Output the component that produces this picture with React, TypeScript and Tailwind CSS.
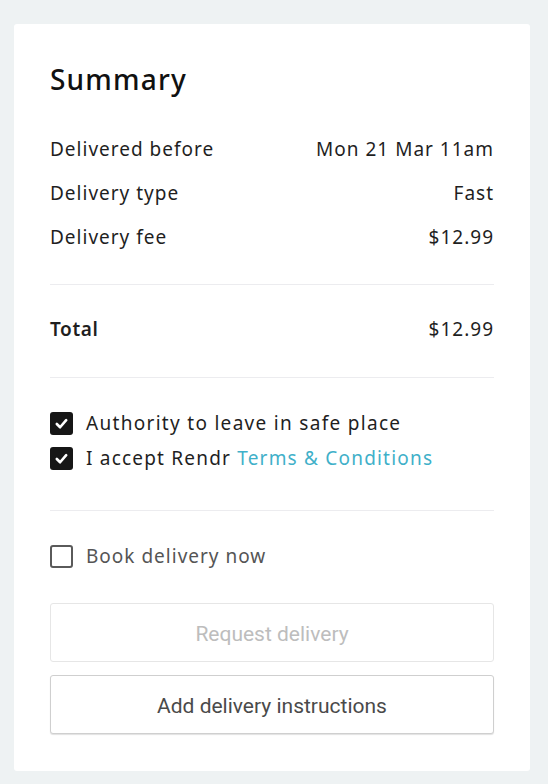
import React from "react";

const font = { fontFamily: '"Noto Sans", "Open Sans", sans-serif' };

function Checked() {
  return (
    <span className="flex h-[23px] w-[23px] shrink-0 items-center justify-center rounded-[3px] bg-[#161616]">
      <svg width="15" height="15" viewBox="0 0 16 16" fill="none">
        <path d="M3 8.5 L6.5 12 L13 4.5" stroke="white" strokeWidth="2.8" strokeLinecap="round" strokeLinejoin="round" />
      </svg>
    </span>
  );
}

function Unchecked() {
  return <span className="h-[23px] w-[23px] shrink-0 rounded-[3px] border-2 border-[#5a5a5a] bg-white" />;
}

function Row({ label, value, bold }: { label: string; value: string; bold?: boolean }) {
  return (
    <div className="flex h-[44px] items-center justify-between text-[19px] tracking-[1px] text-[#1f1f1f]">
      <span className={bold ? "font-semibold tracking-[0.6px]" : ""}>{label}</span>
      <span>{value}</span>
    </div>
  );
}

export default function App() {
  return (
    <div className="min-h-[784px] bg-[#eef2f3] pl-[14px] pr-[18px] pt-[24px] pb-[13px]" style={font}>
      <div className="flex w-[516px] flex-col rounded-[3px] bg-white px-[36px] pt-[39px] pb-[37px]">
        <h1 className="h-[32px] text-[28px] leading-[32px] font-medium tracking-[1.2px] text-[#111]">Summary</h1>
        <div className="mt-[32px] pb-[25px]">
          <Row label="Delivered before" value="Mon 21 Mar 11am" />
          <Row label="Delivery type" value="Fast" />
          <Row label="Delivery fee" value="$12.99" />
        </div>
        <div className="border-t border-[#ececef] pt-[22px] pb-[26px]">
          <Row label="Total" value="$12.99" bold />
        </div>
        <div className="border-t border-[#ececef] pt-[28px] pb-[34px]">
          <label className="flex h-[35px] items-center gap-[13px] text-[19px] tracking-[1.3px] text-[#1f1f1f]">
            <Checked />
            <span>Authority to leave in safe place</span>
          </label>
          <label className="flex h-[35px] items-center gap-[13px] text-[19px] tracking-[1.2px] text-[#1f1f1f]">
            <Checked />
            <span>
              I accept Rendr <span className="text-[#3fb0c9]">Terms &amp; Conditions</span>
            </span>
          </label>
        </div>
        <div className="border-t border-[#ececef] pt-[28px]">
          <label className="flex h-[35px] items-center gap-[13px] text-[19px] tracking-[1px] text-[#555]">
            <Unchecked />
            <span>Book delivery now</span>
          </label>
          <div className="mt-[29px] flex flex-col gap-[13px]" style={{ fontFamily: 'Roboto, sans-serif' }}>
            <button className="flex h-[59px] w-full items-center justify-center rounded-[3px] border border-[#e6e6e6] bg-white pt-[4px] text-[21px] text-[#bdbdbd]">
              Request delivery
            </button>
            <button className="flex h-[59px] w-full items-center justify-center rounded-[3px] border border-[#cfcfcf] bg-white pt-[4px] text-[21px] text-[#4a4a4a] shadow-[0_1px_1px_rgba(0,0,0,0.12)]">
              Add delivery instructions
            </button>
          </div>
        </div>
      </div>
    </div>
  );
}
